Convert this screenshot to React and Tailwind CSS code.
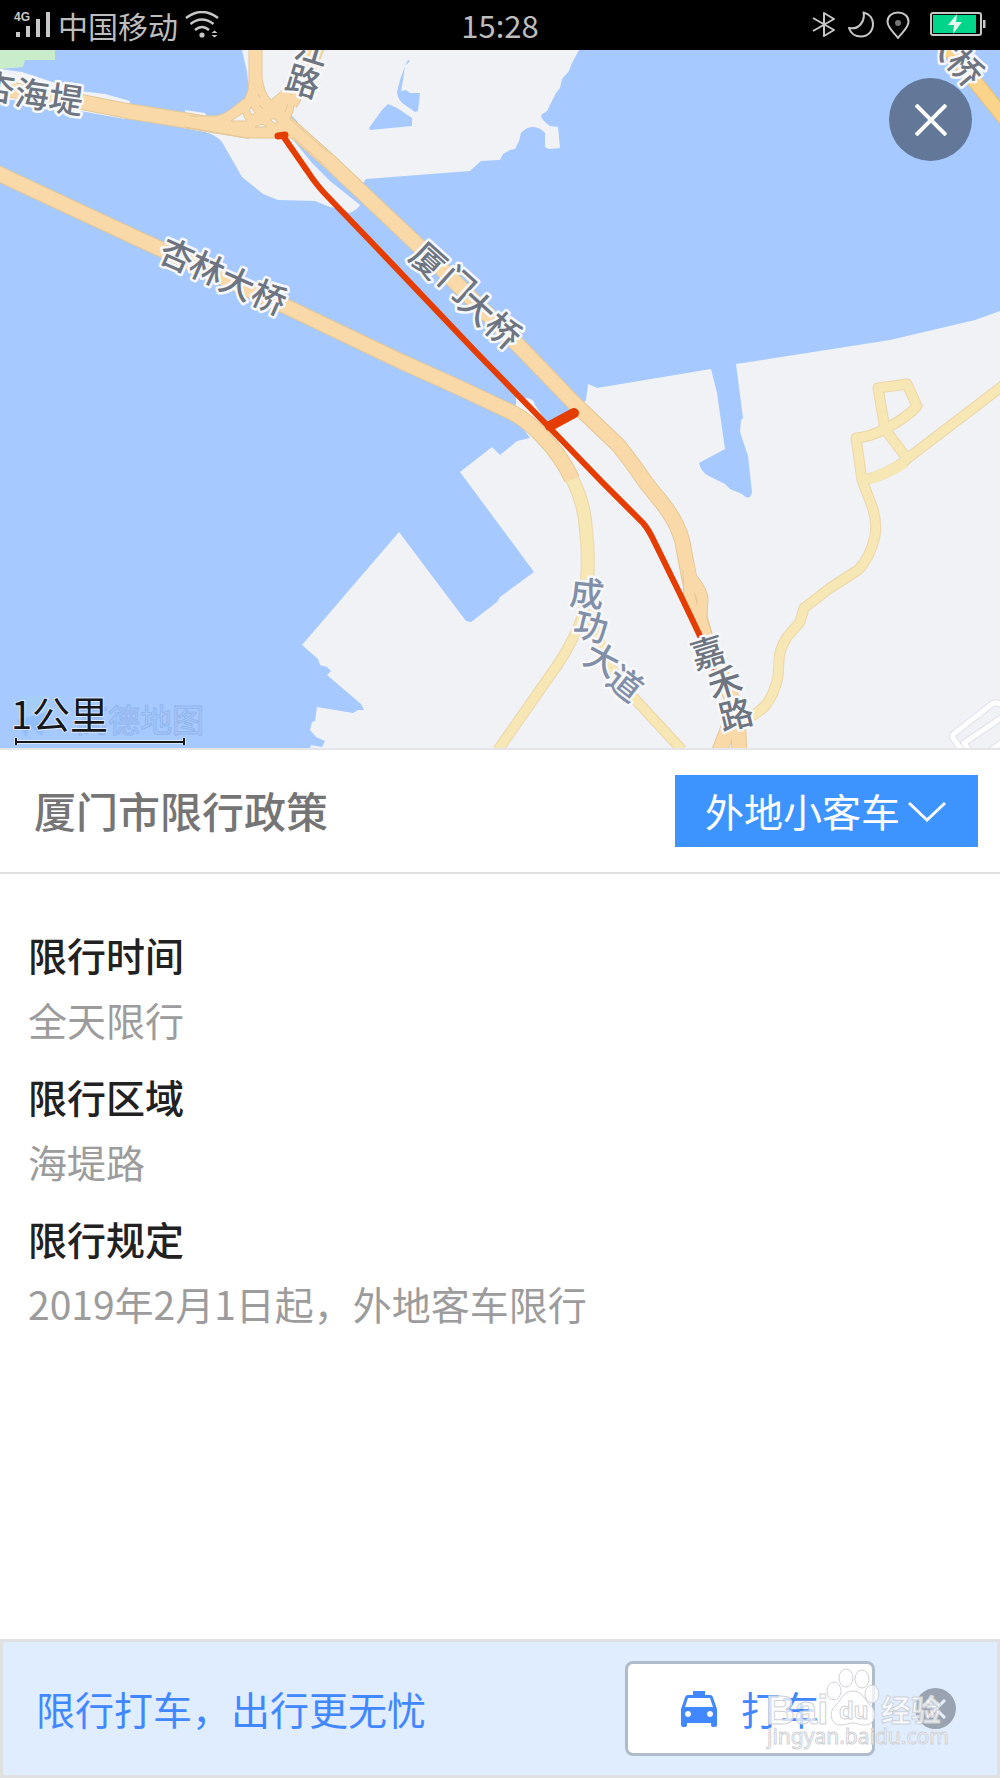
import React from "react";
import { MdLocalTaxi } from "react-icons/md";

const LAND = "#f0f2f6";
const WATER = "#a6c9ff";

const ORANGE_ROADS = [
  "M285 122 L330 162 L422 249 L523 350 L573 402 L618 445 Q632 462 646 483 L663 504 Q677 522 682 540 L689 577 L696 605 L706 640 L728 690 Q739 710 739 750",
  "M-5 172 L130 235 L287 307 L400 361 L460 388 L513 413 Q528 421 543 437 Q562 457 572 479",
  "M-5 87 L82 102 L127 111 L183 120 L250 131",
  "M719 752 L729 726",
  "M290 104 L303 80 L318 44",
];

const YELLOW_ROADS = [
  "M590 610 Q597 640 607 660 Q618 682 633 697 L682 750",
  "M587 580 Q586 612 576 632 Q566 653 556 667 L498 750",
  "M885 429 L908 460",
  "M1005 384 L908 458 Q897 469 875 477 L862 480",
  "M885 429 L878 388 L907 384 L917 406 Q908 417 885 429 Q870 437 856 438 L862 480 L873 509 Q877 523 875 536 Q870 558 858 570 L830 588 L804 608 L800 622 L787 637 Q779 650 779 660 L778 677 Q774 695 765 706 Q757 714 746 719",
];

const LABELS = [
  { color: "#6e7581", chars: [["杏", -2, 88, 8], ["海", 32, 95, 8], ["堤", 66, 100, 8]] },
  { color: "#6e7581", chars: [["江", 312, 50, 17], ["路", 303, 82, 17]] },
  { color: "#6e7581", chars: [["杏", 177, 256, 24], ["林", 207, 269, 24], ["大", 237, 284, 24], ["桥", 269, 298, 24]] },
  { color: "#6e7581", chars: [["厦", 428, 261, 42], ["门", 457, 284, 42], ["大", 477, 308, 42], ["桥", 503, 331, 42]] },
  { color: "#828fa9", chars: [["成", 587, 594, 6], ["功", 591, 627, 14], ["大", 602, 660, 28], ["道", 625, 684, 38]] },
  { color: "#6e7581", chars: [["嘉", 708, 653, -17], ["禾", 725, 683, -17], ["路", 736, 715, -14]] },
  { color: "#6e7581", chars: [["大", 943, 43, 50], ["桥", 965, 68, 50]] },
];

const RULES = [
  { title: "限行时间", text: "全天限行" },
  { title: "限行区域", text: "海堤路" },
  { title: "限行规定", text: "2019年2月1日起，外地客车限行" },
];

function StatusBar() {
  return (
    <div className="grid h-[50px] grid-cols-[1fr_auto_1fr] items-center bg-black pr-3.5 pl-3.5 text-[30px] leading-[50px] text-[#bdbdbd]">
      <div className="flex items-center">
        <svg className="h-[28px] w-[38px]" viewBox="0 0 38 28" fill="#c8c8c8" aria-label="4G 信号">
          <text x="0" y="10" fontSize="12" fontWeight="700" fontFamily="Liberation Sans, sans-serif">4G</text>
          <rect x="2" y="21" width="4" height="5" />
          <rect x="12" y="15" width="4" height="11" />
          <rect x="22" y="8" width="4" height="18" />
          <rect x="32" y="1" width="4" height="25" />
        </svg>
        <span className="ml-1.5">中国移动</span>
        <svg className="ml-1.5 h-[28px] w-[36px]" viewBox="0 0 36 28" fill="none" stroke="#c8c8c8" strokeWidth="2.5" aria-label="无线网络">
          <path d="M2 7 Q18 -5 34 7 M6.500 13 Q18 4 29.500 13 M11 19 Q18 13 25 19" />
          <circle cx="18" cy="24" r="2.600" fill="#c8c8c8" stroke="none" />
          <path d="M27.500 22 L30.500 19.500 L33.500 22 Z M27.500 24 L30.500 26.500 L33.500 24 Z" fill="#c8c8c8" stroke="none" />
        </svg>
      </div>
      <span className="text-[31px]">15:28</span>
      <div className="flex items-center justify-end">
        <svg className="h-[28px] w-[24px]" viewBox="0 0 24 28" fill="none" stroke="#c8c8c8" strokeWidth="2" aria-label="蓝牙">
          <path d="M1 7 L22 19 L12 25 V2 L22 8 L1 20" strokeLinejoin="round" />
        </svg>
        <svg className="ml-3 h-[28px] w-[26px]" viewBox="0 0 26 28" fill="none" stroke="#c8c8c8" strokeWidth="2" strokeLinejoin="round" aria-label="勿扰模式">
          <path d="M15.500 1.500 C22 3 25 8 25 13 C25 20 20 25.500 13 25.500 C7 25.500 2.500 22 1 17 C6 18 10 16.500 12.500 13.500 C15.500 10 16.500 6 15.500 1.500 Z" />
        </svg>
        <svg className="ml-3 h-[28px] w-[24px]" viewBox="0 0 24 28" fill="none" stroke="#c8c8c8" strokeWidth="2" aria-label="定位">
          <path d="M12 27 C8 21.500 1.500 17 1.500 10.500 C1.500 5 6 1.500 12 1.500 C18 1.500 22.500 5 22.500 10.500 C22.500 17 16 21.500 12 27 Z" />
          <circle cx="12" cy="12" r="3" fill="#777" stroke="none" />
        </svg>
        <svg className="ml-5 h-[26px] w-[56px]" viewBox="0 0 56 26" aria-label="电量">
          <rect x="1" y="1" width="50" height="22" rx="2" fill="none" stroke="#c8c8c8" strokeWidth="2" />
          <rect x="3" y="3" width="43" height="18" fill="#00d68a" />
          <rect x="53" y="8" width="2.500" height="8" fill="#c8c8c8" />
          <path d="M27 2 L18 13 H24 L23 22 L32 10 H26 Z" fill="#e2f8ee" />
        </svg>
      </div>
    </div>
  );
}

function RoadSet({ roads, fill, casing, width }) {
  return (
    <g fill="none" strokeLinejoin="round">
      {roads.map((d) => <path key={d} d={d} stroke={casing} strokeWidth={width + 2} />)}
      {roads.map((d) => <path key={d} d={d} stroke={fill} strokeWidth={width} />)}
    </g>
  );
}

function RouteMap() {
  return (
    <svg className="block w-full" viewBox="0 50 1000 698" role="img" aria-label="限行路线地图">
      <rect x="0" y="50" width="1000" height="698" fill={WATER} />
      <path d="M0 50 H55 V60 H25 L23 67 L0 69 Z" fill="#c9ecca" />
      <g fill={LAND}>
        <path d="M0 69 L22 72 L80 91 L105 94 L130 101 L125 119 L80 111 L0 98 Z" />
        <path d="M185 110 L205 113 L208 118 L185 118 Z" />
        <path d="M242 50 L247 72 L250 100 L290 116 L363 183 L366 179 L470 171 L481 161 L500 160 L503 154 L510 150 L515 149 L519 141 L521 133 Q527 126 534 127 Q541 128 545 133 L545 147 L549 149 L560 148 L558 127 L550 126 Q541 120 541 115 L547 111 L556 93 L560 88 L562 79 L569 71 L572 63 L579 50 Z" />
        <path d="M183 128 L205 132 Q216 135 222 142 L242 177 L263 194 L278 200 L315 201 L330 207 L340 209 L350 213 Q358 209 360 205 L330 181 L312 163 L291 137 L250 128 Z" />
        <path d="M588 384 L597 388 L711 369 L717 393 L725 449 L699 463 Q701 471 707 475 L725 484 L730 489 L742 494 Q750 502 752 492 L748 456 L740 432 L741 420 L743 418 L736 364 L890 340 L975 320 L1000 311 V748 H310 L311 745 L322 747 L325 741 L316 737 L310 730 L312 722 L315 721 L317 707 L353 713 L358 710 L364 710 L361 704 L327 675 L331 671 L327 667 L320 665 L318 659 L302 645 L399 532 L466 621 L471 622 L497 602 L500 597 L534 572 L460 472 L492 447 L500 455 L517 441 L530 438 L516 418 V397 L525 398 Q534 398 535 405 L548 424 L577 410 L586 400 Z" />
      </g>
      <g fill={WATER}>
        <path d="M408 60 L405 66 L400 80 L397 92 Q398 101 405 105 L415 112 L418 111 L420 93 L410 93 L406 90 L401 91 L403 80 L405 66 L410 61 Z" />
        <path d="M369 128 L382 110 L388 104 L397 108 L412 118 L412 126 L370 130 Z" />
        <path d="M291 115 L297 121 L300 128 L292 128 Z" />
      </g>

      <RoadSet roads={YELLOW_ROADS} fill="#f6e7b4" casing="#ecd6aa" width={9} />
      <RoadSet roads={["M571 477 Q584 500 586 530 Q589 555 587 582"]} fill="#f6e7b4" casing="#ecd6aa" width={12} />
      <path d="M869 479 L875 477 Q890 472 905 462" fill="none" stroke="#f6e7b4" strokeWidth="11" />
      <RoadSet roads={ORANGE_ROADS} fill="#fad9a9" casing="#e4c796" width={14} />
      <RoadSet roads={["M940 38 L1006 120"]} fill="#fad48a" casing="#efbf6b" width={13} />

      <path d="M249 48 H262 V78 Q264 92 271 100 L284 89 L295 97 L293 111 L290 119 L330 154 V170 L294 138 L248 138 L242 137 L185 127 L185 116 L216 116 Q223 115 231 109 L245 98 Q249 91 249 80 Z" fill="#fad9a9" stroke="#e4c796" strokeWidth="1" />
      <path d="M331 155 L350 174 L343 184 L325 165 L327 151 Z M286 100 L296 92 L301 92 L294 106 Z M180 114 L190 116 L190 127 L180 125 Z" fill="#fad9a9" />
      <g fill={LAND} stroke="#e4c796" strokeWidth="1">
        <path d="M231 121 L243 113 Q244 118 247 121 Z" />
        <path d="M251 107 L255 113 L252 115 Q248 110 251 107 Z" />
        <path d="M255 127 L262 124 L267 127 Z" />
        <path d="M270 119 L275 119 L278 123 L274 123 Z" />
      </g>
      <path d="M258 94 L260 98 M259 105 L263 109 M285 112 L288 104" fill="none" stroke="#e4c796" strokeWidth="1" />
      <path d="M683 570 L696 575 Q707 588 708 598 L707 618 L713 638 L703 640 L684 602 Z" fill="#fad9a9" stroke="#e4c796" strokeWidth="1" />
      <path d="M683 560 L693 560 L697 580 L684 585 Z" fill="#fad9a9" />
      <path d="M694 592 Q699 598 697 606 Z" fill="#e4c796" />

      <g fill="none" strokeLinejoin="round">
        <path d="M966 756 L953 738 Q952 735 955 733 L992 704 Q997 701 1003 706 M1004 716 L964 743 L974 758 M986 754 L1004 741" stroke="#dfe2ea" strokeWidth="7" />
        <path d="M966 756 L953 738 Q952 735 955 733 L992 704 Q997 701 1003 706 M1004 716 L964 743 L974 758 M986 754 L1004 741" stroke="#fff" strokeWidth="5" />
      </g>

      <g fill="none" stroke="#e53c00" strokeLinejoin="round" strokeLinecap="round">
        <path d="M283 136 L308 172 Q317 186 330 199 L378 249 L474 350 L547 425 L603 483 L643 523 Q649 530 655 543 L680 594 L701 638" strokeWidth="6" />
        <path d="M278 136 L285 135" strokeWidth="7" />
        <path d="M550 426 L574 413" strokeWidth="10" />
        <path d="M714 670 L717 669" strokeWidth="3" />
      </g>

      <g fontFamily="Noto Sans CJK SC, sans-serif" fontSize="34" fontWeight="500" textAnchor="middle">
        {LABELS.map((label, i) => (
          <g key={i} fill={label.color} stroke="#f7f8fa" strokeWidth="5" strokeLinejoin="round" paintOrder="stroke">
            {label.chars.map(([char, x, y, angle]) => (
              <text key={x} transform={`translate(${x} ${y}) rotate(${angle})`} y="12">{char}</text>
            ))}
          </g>
        ))}
      </g>

      <g opacity="0.500">
        <path d="M22 696 H50 V712 H16 V702 Z" fill="#a4d3ee" />
        <path d="M17 720 L50 712 L42 736 L30 726 L26 738 Z" fill="#7fb4fa" />
      </g>
      <text x="76" y="732" fontSize="32" fontFamily="Noto Sans CJK SC, sans-serif" fill={WATER} stroke="#91b5ec" strokeWidth="1">高德地图</text>
      <text x="11" y="729" fontSize="38" fontFamily="Noto Sans CJK SC, sans-serif" fill="#15171b" stroke="#dbe8fb" strokeWidth="2" paintOrder="stroke">1公里</text>
      <path d="M16 742 H184 M16 738 V745 M184 738 V745" stroke="#dbe8fb" strokeWidth="4" />
      <path d="M16 742 H184 M16 738 V745 M184 738 V745" stroke="#15171b" strokeWidth="2" />
    </svg>
  );
}

function BaiduMark() {
  return (
    <svg className="pointer-events-none absolute right-[47px] bottom-[17px] h-[92px] w-[184px]" viewBox="0 0 184 92" fill="#fff" fillOpacity="0.750" stroke="#cfd2d6" strokeWidth="1" aria-hidden="true">
      <ellipse cx="80" cy="12" rx="7" ry="9" />
      <ellipse cx="96" cy="13" rx="7" ry="9" />
      <ellipse cx="68" cy="25" rx="7" ry="9" />
      <ellipse cx="106" cy="28" rx="7" ry="9" />
      <path d="M87 25 C97 25 99 35 105 40 C112 47 109 59 99 59 C93 59 91 57 87 57 C83 57 81 59 75 59 C65 59 62 47 69 40 C75 35 77 25 87 25 Z" />
      <g>
        <text x="0" y="58" fontSize="40" fontWeight="700" fontFamily="Liberation Sans, sans-serif">Bai</text>
        <text x="73" y="53" fontSize="24" fontWeight="700" fontFamily="Liberation Sans, sans-serif">du</text>
        <text x="115" y="55" fontSize="30" fontWeight="700" fontFamily="Noto Sans CJK SC, sans-serif">经验</text>
        <text x="1" y="78" fontSize="21" fontFamily="Noto Sans, sans-serif">jingyan.baidu.com</text>
      </g>
    </svg>
  );
}

export default function App() {
  return (
    <div className="flex min-h-screen flex-col bg-white font-['Noto_Sans_CJK_SC',sans-serif]">
      <StatusBar />

      <div className="relative border-b-2 border-[#e4e5e8]">
        <RouteMap />
        <button type="button" aria-label="关闭地图" className="absolute top-7 right-7 flex size-[83px] items-center justify-center rounded-full bg-[#637899]">
          <svg className="size-8" viewBox="0 0 32 32" stroke="#fff" strokeWidth="4">
            <path d="M1 1 L31 31 M31 1 L1 31" />
          </svg>
        </button>
      </div>

      <header className="flex h-[124px] items-center justify-between border-b-2 border-[#e0e0e0] pr-[22px] pl-[34px]">
        <h1 className="pb-0.5 text-[42px] leading-[60px] font-medium text-[#757575]">厦门市限行政策</h1>
        <div className="relative">
          <select aria-label="车辆类型" className="h-[72px] w-[303px] appearance-none bg-[#3d94ff] pb-0.5 pl-[30px] text-[39px] leading-[60px] text-white">
            <option>外地小客车</option>
          </select>
          <svg className="pointer-events-none absolute top-[26px] right-8 h-[22px] w-[38px]" viewBox="0 0 38 22" fill="none" stroke="#fff" strokeWidth="3">
            <path d="M1 2 L19 19 L37 2" />
          </svg>
        </div>
      </header>

      <main className="flex grow flex-col gap-3 px-7 pt-12 text-[39px] leading-[65px]">
        {RULES.map((rule) => (
          <section key={rule.title}>
            <h2 className="font-medium text-[#212121]">{rule.title}</h2>
            <p className="text-[#9c9c9c]">{rule.text}</p>
          </section>
        ))}
      </main>

      <footer className="relative flex h-[139px] items-center border-3 border-[#dfe0e1] bg-[#e0edff] pr-[41px] pl-[33px] text-[39px] leading-[60px] text-[#4187ff]">
        <p className="grow pb-0.5">限行打车，出行更无忧</p>
        <button type="button" className="flex h-[95px] w-[250px] items-center rounded-lg border-3 border-[#b0bccb] bg-white pl-[47px]">
          <MdLocalTaxi className="size-[48px]" />
          <span className="ml-[18px] pb-0.5">打车</span>
        </button>
        <button type="button" aria-label="关闭提示" className="ml-10 flex size-[41px] items-center justify-center rounded-full bg-[#9aa3b1]">
          <svg className="size-[20px]" viewBox="0 0 20 20" stroke="#e6effb" strokeWidth="3">
            <path d="M1 1 L19 19 M19 1 L1 19" />
          </svg>
        </button>
        <BaiduMark />
      </footer>
    </div>
  );
}
